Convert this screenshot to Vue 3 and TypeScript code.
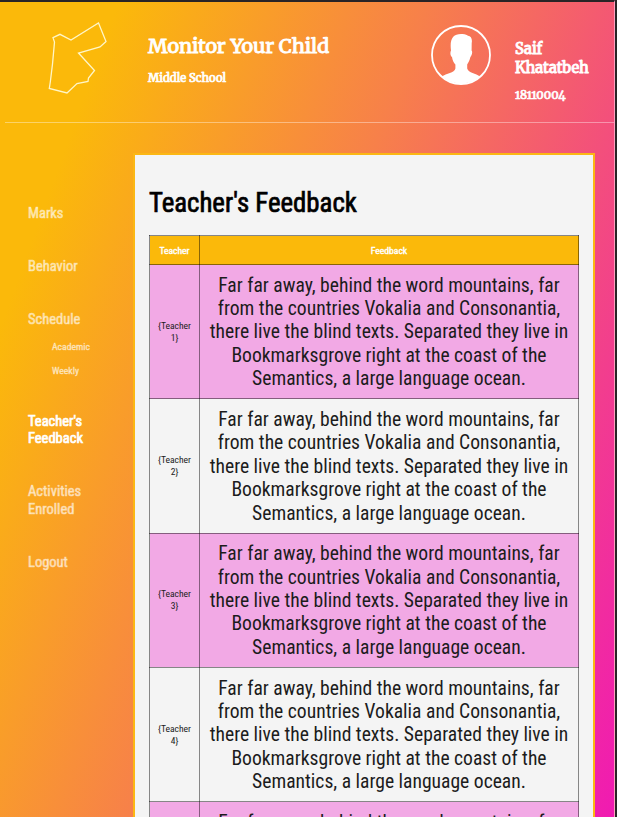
<script setup lang="ts">
interface NavItem {
  label: string
  active?: boolean
  children?: string[]
}

const nav: NavItem[] = [
  { label: 'Marks' },
  { label: 'Behavior' },
  { label: 'Schedule', children: ['Academic', 'Weekly'] },
  { label: "Teacher's Feedback", active: true },
  { label: 'Activities Enrolled' },
  { label: 'Logout' },
]

const lines: string[] = [
  'Far far away, behind the word mountains, far',
  'from the countries Vokalia and Consonantia,',
  'there live the blind texts. Separated they live in',
  'Bookmarksgrove right at the coast of the',
  'Semantics, a large language ocean.',
]
const teachers: number[] = [1, 2, 3, 4, 5]
</script>

<template>
  <div class="page">
    <header class="header">
      <svg class="map" width="60" height="74" viewBox="0 0 60 74">
        <path d="M50.500 1 58 19.500 52 25 30.500 31 46.500 48.500 40.500 56 40 59.500 29 61.500 19 71 1.300 66.500 2.300 60 4.500 42 6.500 20 5 15.700 12 12.300 23 18Z" />
      </svg>
      <div class="brand">
        <h2 class="title">Monitor Your Child</h2>
        <p class="school">Middle School</p>
      </div>
      <svg class="avatar" width="60" height="60" viewBox="0 0 60 60">
        <circle cx="30" cy="30" r="29" fill="none" stroke="#fff" stroke-width="1.800" />
        <path fill="#fff" d="M30 9C34 8.500 36 10 37 10.800C40 11 41.500 14 40.700 18L40.600 25.500C42 27 40.500 31 39.400 32C38.500 36 37 38 36.200 39.500V43.500C37.500 48 45 48.500 49 51.500A29 29 0 0 1 11 51.500C15 48.500 23.500 48 24.400 43.500V39.500C22.500 37.500 21.500 35 21 32C19.500 31 18.800 28 20 25.500C18.500 14 22 9 30 9Z" />
      </svg>
      <div class="student">
        <div class="name">Saif<br />Khatatbeh</div>
        <div class="number">18110004</div>
      </div>
    </header>
    <div class="body">
      <nav class="nav">
        <div v-for="item in nav" :key="item.label" class="entry" :class="{ active: item.active }">
          <a class="link">{{ item.label }}</a>
          <a v-for="child in item.children" :key="child" class="sub">{{ child }}</a>
        </div>
      </nav>
      <main class="panel">
        <h1>Teacher's Feedback</h1>
        <table>
          <thead>
            <tr><th class="who">Teacher</th><th>Feedback</th></tr>
          </thead>
          <tbody>
            <tr v-for="n in teachers" :key="n">
              <td class="who">{Teacher<br />{{ n }}}</td>
              <td class="text"><div v-for="line in lines" :key="line">{{ line }}</div></td>
            </tr>
          </tbody>
        </table>
      </main>
    </div>
  </div>
</template>

<style>
body { overflow: hidden; background: #292426; }
</style>

<style scoped>
* { box-sizing: border-box; }
.page {
  width: 615px;
  height: 817px;
  overflow: hidden;
  border-top: 2px solid #292426;
  border-right: 1px solid #ff9fc0;
  background: linear-gradient(110deg, #fbb90a 0%, #fbb90a 13%, #f7804a 47%, #f34f7c 72%, #f01ab2 100%);
  font-family: "Roboto Condensed", Roboto, sans-serif;
  font-stretch: 75%;
}
.header {
  display: flex;
  align-items: flex-start;
  height: 121px;
  margin-left: 5px;
  border-bottom: 1px solid rgba(255, 255, 255, .38);
  color: #fff;
  font-family: Merriweather, "DejaVu Serif", serif;
  font-weight: 400;
  -webkit-text-stroke: .9px #fff;
}
.map { flex: none; margin: 20px 0 0 43px; fill: none; stroke: #fff6c8; stroke-width: 1.300; }
.brand { flex: none; width: 323px; padding: 30px 0 0 40px; }
.title, .school { margin: 0; font-weight: 400; white-space: nowrap; }
.title { height: 30px; font-size: 19.750px; line-height: 29px; }
.school { margin-top: 8px; font-size: 11.400px; line-height: 17px; -webkit-text-stroke: .7px #fff; }
.avatar { flex: none; margin-top: 23px; }
.student { padding: 38px 0 0 24px; }
.name { font-size: 14.700px; line-height: 19px; }
.number { margin-top: 8px; font-size: 11.700px; line-height: 17px; letter-spacing: .1px; font-variant-numeric: oldstyle-nums; -webkit-text-stroke: .7px #fff; }
.body { display: flex; }
.nav { width: 133px; padding: 82.300px 0 0 28px; }
.entry { width: 70px; margin-bottom: 35px; color: rgba(255, 255, 255, .5); }
.link { display: block; font-size: 14.500px; font-weight: 400; line-height: 17.700px; -webkit-text-stroke: .7px; }
.sub { display: block; margin: 10px 0 0 24px; font-size: 9.700px; font-weight: 400; line-height: 14px; -webkit-text-stroke: .5px; }
.link + .sub { margin-top: 11.300px; }
.active { color: #fff; }
.panel {
  width: 462px;
  height: 720px;
  margin-top: 30px;
  padding: 0 14px;
  border: 2px solid #fbb714;
  background: #f4f4f4;
  color: #000;
}
h1 { margin: 32px 0 16px; font-size: 26.800px; font-weight: 400; line-height: 32px; -webkit-text-stroke: .7px; }
table { width: 430px; border-collapse: collapse; table-layout: fixed; }
th, td { padding: 0; border: 1px solid rgba(0, 0, 0, .45); text-align: center; }
th { height: 29px; background: #fbb90a; color: #fff; font-size: 9.600px; font-weight: 400; -webkit-text-stroke: .4px #fff; }
th.who { width: 50px; }
td { height: 134.300px; font-weight: 400; }
td.who { font-size: 9.600px; line-height: 12px; color: #222; }
.text { padding-top: 1px; font-size: 19.600px; line-height: 23.400px; color: #1c1c1c; white-space: nowrap; }
tbody tr:nth-child(odd) { background: #f2a9e5; }
</style>
